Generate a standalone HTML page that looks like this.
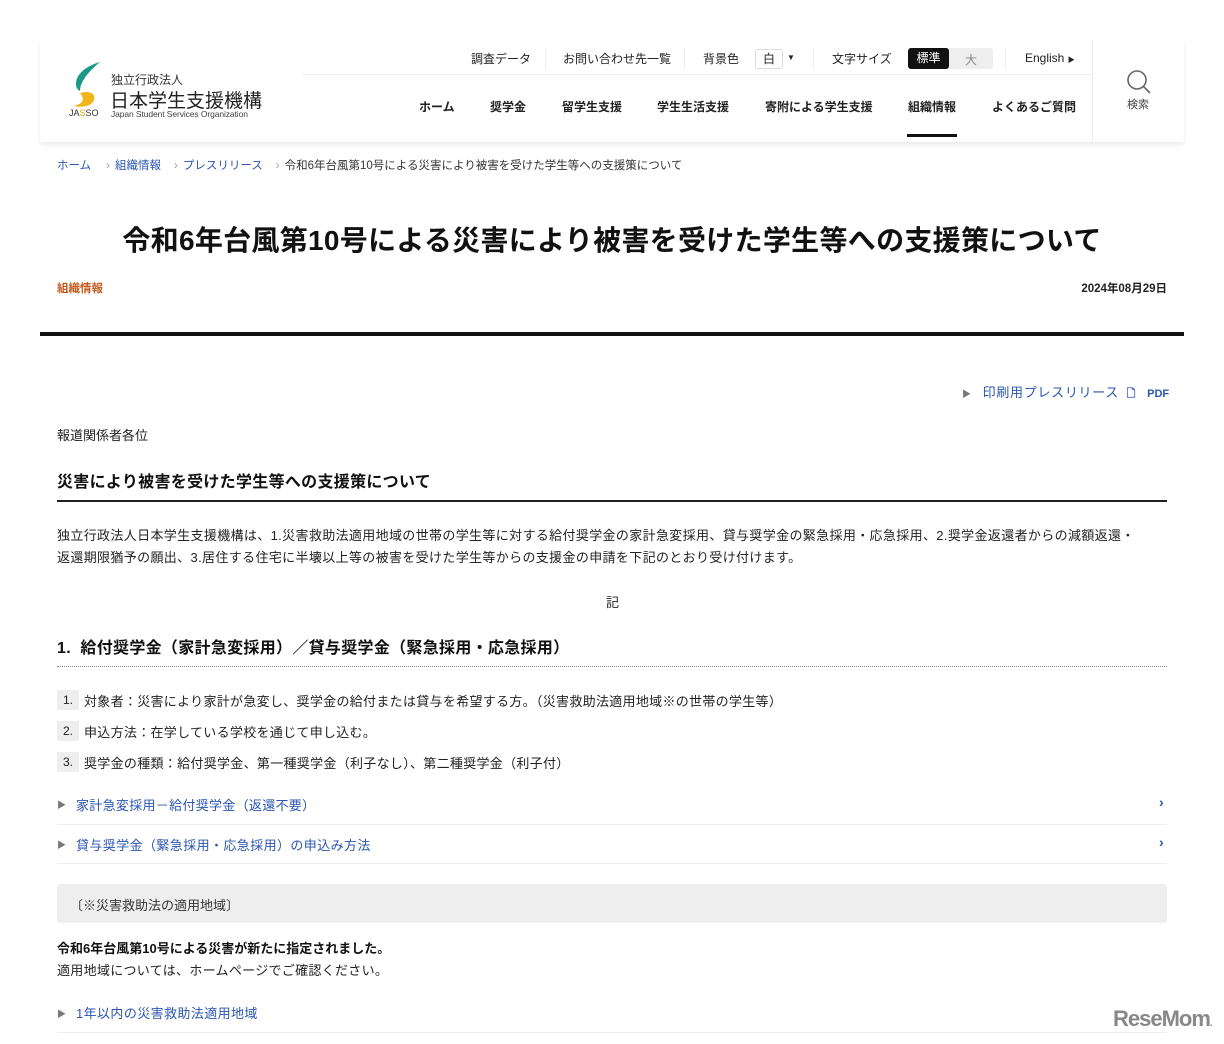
<!DOCTYPE html>
<html><head><meta charset="utf-8">
<style>
*{margin:0;padding:0;box-sizing:border-box}
body{width:1224px;height:1044px;background:#fff;font-family:"Liberation Sans","Noto Sans CJK JP",sans-serif;color:#222;position:relative;overflow:hidden}
.a{position:absolute;white-space:nowrap}
.s12{font-size:12px}.s13{font-size:13px}
.b{font-weight:bold}
.blue{color:#2a55b0}
.tri{color:#777;font-size:9px}
.num{width:22px;height:20px;background:#eee;font-size:12px;text-align:center;line-height:20px}
</style></head><body>
<div class="a" style="left:40px;top:40px;width:1144px;height:102px;box-shadow:0 3px 4px rgba(0,0,0,0.08);background:#fff"></div>
<div class="a" style="left:1092px;top:40px;width:1px;height:102px;background:#eee"></div>
<div class="a" style="left:302px;top:74px;width:790px;height:1px;background:#eee"></div>
<svg class="a" style="left:68px;top:60px" width="36" height="50" viewBox="0 0 36 50">
<path d="M32 2 C18 6 8 14 8 24 C8 28 10 30 12 31 C12 22 20 12 32 2Z" fill="#1a9a86"/>
<path d="M12 33 C22 30 28 34 26 40 C24 46 14 48 6 46 C14 44 18 40 12 33Z" fill="#f3b418"/>
</svg>
<div class="a" style="left:69px;top:108px;font-size:9px;color:#333">JA<span style="color:#e0a000">S</span>SO</div>
<div class="a" style="left:111px;top:71px;font-size:12px;color:#333">独立行政法人</div>
<div class="a" style="left:110px;top:86px;font-size:19px;color:#222">日本学生支援機構</div>
<div class="a" style="left:111px;top:109px;font-size:8.5px;color:#444;letter-spacing:-0.1px">Japan Student Services Organization</div>

<div class="a s12" style="left:471px;top:50px">調査データ</div>
<div class="a" style="left:545px;top:47px;width:1px;height:22px;background:#eee"></div>
<div class="a s12" style="left:563px;top:50px">お問い合わせ先一覧</div>
<div class="a" style="left:684px;top:47px;width:1px;height:22px;background:#eee"></div>
<div class="a s12" style="left:703px;top:50px">背景色</div>
<div class="a s12" style="left:755px;top:49px;width:28px;height:20px;border:1px solid #ddd;border-radius:3px;text-align:center;line-height:18px">白</div>
<div class="a" style="left:787px;top:53px;font-size:8px">▼</div>
<div class="a" style="left:813px;top:47px;width:1px;height:22px;background:#eee"></div>
<div class="a s12" style="left:832px;top:50px">文字サイズ</div>
<div class="a" style="left:908px;top:48px;width:85px;height:21px;background:#eee;border-radius:3px"></div>
<div class="a s12" style="left:908px;top:48px;width:41px;height:21px;background:#111;color:#fff;border-radius:3px;text-align:center;line-height:21px">標準</div>
<div class="a s12" style="left:965px;top:51px;color:#888">大</div>
<div class="a" style="left:1005px;top:47px;width:1px;height:22px;background:#eee"></div>
<div class="a s12" style="left:1025px;top:51px">English <span style="font-size:7px">▶</span></div>

<div class="a s12 b" style="left:419px;top:98px">ホーム</div>
<div class="a s12 b" style="left:490px;top:98px">奨学金</div>
<div class="a s12 b" style="left:562px;top:98px">留学生支援</div>
<div class="a s12 b" style="left:657px;top:98px">学生生活支援</div>
<div class="a s12 b" style="left:765px;top:98px">寄附による学生支援</div>
<div class="a s12 b" style="left:908px;top:98px">組織情報</div>
<div class="a" style="left:907px;top:134px;width:50px;height:3px;background:#111"></div>
<div class="a s12 b" style="left:992px;top:98px">よくあるご質問</div>
<svg class="a" style="left:1125px;top:68px" width="28" height="28" viewBox="0 0 28 28"><circle cx="12" cy="12" r="9" fill="none" stroke="#666" stroke-width="1.6"/><line x1="18.5" y1="18.5" x2="25" y2="25" stroke="#666" stroke-width="1.6"/></svg>
<div class="a" style="left:1127px;top:96px;font-size:11px;color:#444">検索</div>

<div class="a" style="left:57px;top:157px;font-size:11.5px;color:#333"><span class="blue">ホーム</span><span style="color:#999;margin:0 5px 0 15px">›</span><span class="blue">組織情報</span><span style="color:#999;margin:0 5px 0 13px">›</span><span class="blue">プレスリリース</span><span style="color:#999;margin:0 5px 0 13px">›</span>令和6年台風第10号による災害により被害を受けた学生等への支援策について</div>

<div class="a b" style="left:0;width:1224px;text-align:center;top:219px;font-size:28px;letter-spacing:0.3px;color:#111">令和6年台風第10号による災害により被害を受けた学生等への支援策について</div>
<div class="a b" style="left:57px;top:280px;font-size:11.5px;color:#c55a20">組織情報</div>
<div class="a b" style="right:57px;top:280px;font-size:11.5px;color:#222">2024年08月29日</div>
<div class="a" style="left:40px;top:332px;width:1144px;height:4px;background:#111"></div>

<div class="a" style="left:962px;top:382px;font-size:13px"><span class="tri">▶</span> <span class="blue" style="margin-left:8px;letter-spacing:0.7px">印刷用プレスリリース</span> <span class="blue b" style="font-size:11px;margin-left:4px">🗋</span> <span class="blue b" style="font-size:11px;margin-left:8px">PDF</span></div>

<div class="a s13" style="left:57px;top:425px">報道関係者各位</div>
<div class="a b" style="left:57px;top:468px;font-size:16px;color:#111;letter-spacing:0.3px">災害により被害を受けた学生等への支援策について</div>
<div class="a" style="left:57px;top:500px;width:1110px;height:2px;background:#222"></div>
<div class="a s13" style="left:57px;top:525px;line-height:22px;white-space:normal;width:1112px;letter-spacing:0.35px">独立行政法人日本学生支援機構は、1.災害救助法適用地域の世帯の学生等に対する給付奨学金の家計急変採用、貸与奨学金の緊急採用・応急採用、2.奨学金返還者からの減額返還・<br>返還期限猶予の願出、3.居住する住宅に半壊以上等の被害を受けた学生等からの支援金の申請を下記のとおり受け付けます。</div>
<div class="a s13" style="left:606px;top:592px">記</div>

<div class="a b" style="left:57px;top:634px;font-size:16px;color:#111;letter-spacing:0.3px">1.&nbsp; 給付奨学金（家計急変採用）／貸与奨学金（緊急採用・応急採用）</div>
<div class="a" style="left:57px;top:666px;width:1110px;border-top:1px dotted #888"></div>

<div class="a num" style="left:57px;top:690px">1.</div>
<div class="a s13" style="left:84px;top:691px;letter-spacing:0.3px">対象者：災害により家計が急変し、奨学金の給付または貸与を希望する方。（災害救助法適用地域※の世帯の学生等）</div>
<div class="a num" style="left:57px;top:721px">2.</div>
<div class="a s13" style="left:84px;top:722px;letter-spacing:0.3px">申込方法：在学している学校を通じて申し込む。</div>
<div class="a num" style="left:57px;top:752px">3.</div>
<div class="a s13" style="left:84px;top:753px;letter-spacing:0.3px">奨学金の種類：給付奨学金、第一種奨学金（利子なし）、第二種奨学金（利子付）</div>

<div class="a tri" style="left:57px;top:798px">▶</div>
<div class="a s13 blue" style="left:76px;top:795px;letter-spacing:0.3px">家計急変採用－給付奨学金（返還不要）</div>
<div class="a blue b" style="left:1159px;top:794px;font-size:14px">›</div>
<div class="a" style="left:57px;top:824px;width:1110px;height:1px;background:#eee"></div>
<div class="a tri" style="left:57px;top:838px">▶</div>
<div class="a s13 blue" style="left:76px;top:835px;letter-spacing:0.4px">貸与奨学金（緊急採用・応急採用）の申込み方法</div>
<div class="a blue b" style="left:1159px;top:834px;font-size:14px">›</div>
<div class="a" style="left:57px;top:863px;width:1110px;height:1px;background:#eee"></div>

<div class="a" style="left:57px;top:884px;width:1110px;height:39px;background:#eee;border-radius:3px"></div>
<div class="a s13" style="left:70px;top:895px;color:#333">〔※災害救助法の適用地域〕</div>
<div class="a s13 b" style="left:57px;top:938px;color:#111">令和6年台風第10号による災害が新たに指定されました。</div>
<div class="a s13" style="left:57px;top:960px;letter-spacing:0.3px">適用地域については、ホームページでご確認ください。</div>
<div class="a tri" style="left:57px;top:1007px">▶</div>
<div class="a s13 blue" style="left:76px;top:1003px;letter-spacing:0.4px">1年以内の災害救助法適用地域</div>
<div class="a" style="left:57px;top:1032px;width:1110px;height:1px;background:#eee"></div>
<div class="a b" style="left:1113px;top:1006px;font-size:22px;color:#888;letter-spacing:-1px">ReseMom<span style="font-size:10px">.</span></div>
</body></html>
